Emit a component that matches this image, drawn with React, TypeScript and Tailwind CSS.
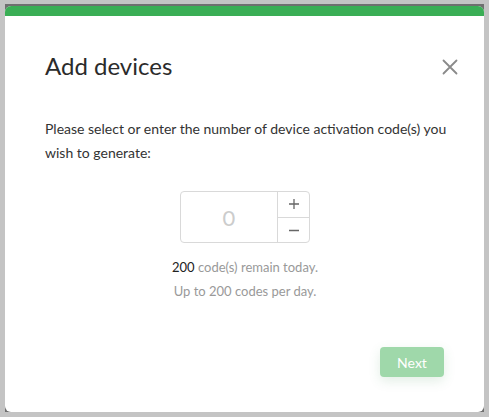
import React from "react";

export default function App() {
  return (
    <div
      className="w-[489px] h-[417px] bg-[#c4c4c4] pt-[4px] pl-[5px] overflow-hidden"
      style={{ fontFamily: "Lato, 'Open Sans', sans-serif" }}
    >
      <div className="w-[479px] h-[408px] bg-[#6f6f6f] pt-[2px]">
        <div className="w-[479px] h-[406px] bg-white rounded-[6px] overflow-hidden flex flex-col">
          <div className="h-[10px] bg-[#3aae55] shrink-0" />
          <div className="flex items-center justify-between pl-[40px] pr-[26px] pt-[35px]">
            <h1 className="text-[24px] leading-[30px] text-[#2b2b2b] font-normal">Add devices</h1>
            <svg width="16" height="16" viewBox="0 0 16 16" className="mt-[2px]">
              <path d="M1.5 1.5 L14.5 14.5 M14.5 1.5 L1.5 14.5" stroke="#8a8a8a" strokeWidth="1.8" strokeLinecap="round" />
            </svg>
          </div>
          <p className="pl-[40px] pr-[30px] mt-[36px] text-[14px] leading-[24px] text-[#333]">
            Please select or enter the number of device activation code(s) you wish to generate:
          </p>
          <div className="flex justify-center mt-[26px] pl-[1px]">
            <div className="flex w-[130px] h-[52px] border border-[#d9d9d9] rounded-[4px]">
              <div className="flex-1 flex items-center justify-center text-[22px] text-[#cccccc]">0</div>
              <div className="w-[32px] border-l border-[#d9d9d9] flex flex-col">
                <div className="flex-1 flex items-center justify-center border-b border-[#d9d9d9]">
                  <svg width="12" height="12" viewBox="0 0 12 12">
                    <path d="M6 1 V11 M1 6 H11" stroke="#666" strokeWidth="1.3" />
                  </svg>
                </div>
                <div className="flex-1 flex items-center justify-center">
                  <svg width="12" height="12" viewBox="0 0 12 12">
                    <path d="M1 6.5 H11" stroke="#666" strokeWidth="1.3" />
                  </svg>
                </div>
              </div>
            </div>
          </div>
          <div className="mt-[12px] text-center text-[13px] leading-[24px] text-[#999] pl-[1px]">
            <div>
              <span className="text-[#222]">200</span> code(s) remain today.
            </div>
            <div>Up to 200 codes per day.</div>
          </div>
          <div className="flex justify-end pr-[40px] mt-[44px]">
            <button className="w-[64px] h-[30px] rounded-[4px] bg-[#9fd8aa] text-white text-[14px] shadow-[0_4px_12px_rgba(60,140,80,0.15)]">
              Next
            </button>
          </div>
        </div>
      </div>
    </div>
  );
}
